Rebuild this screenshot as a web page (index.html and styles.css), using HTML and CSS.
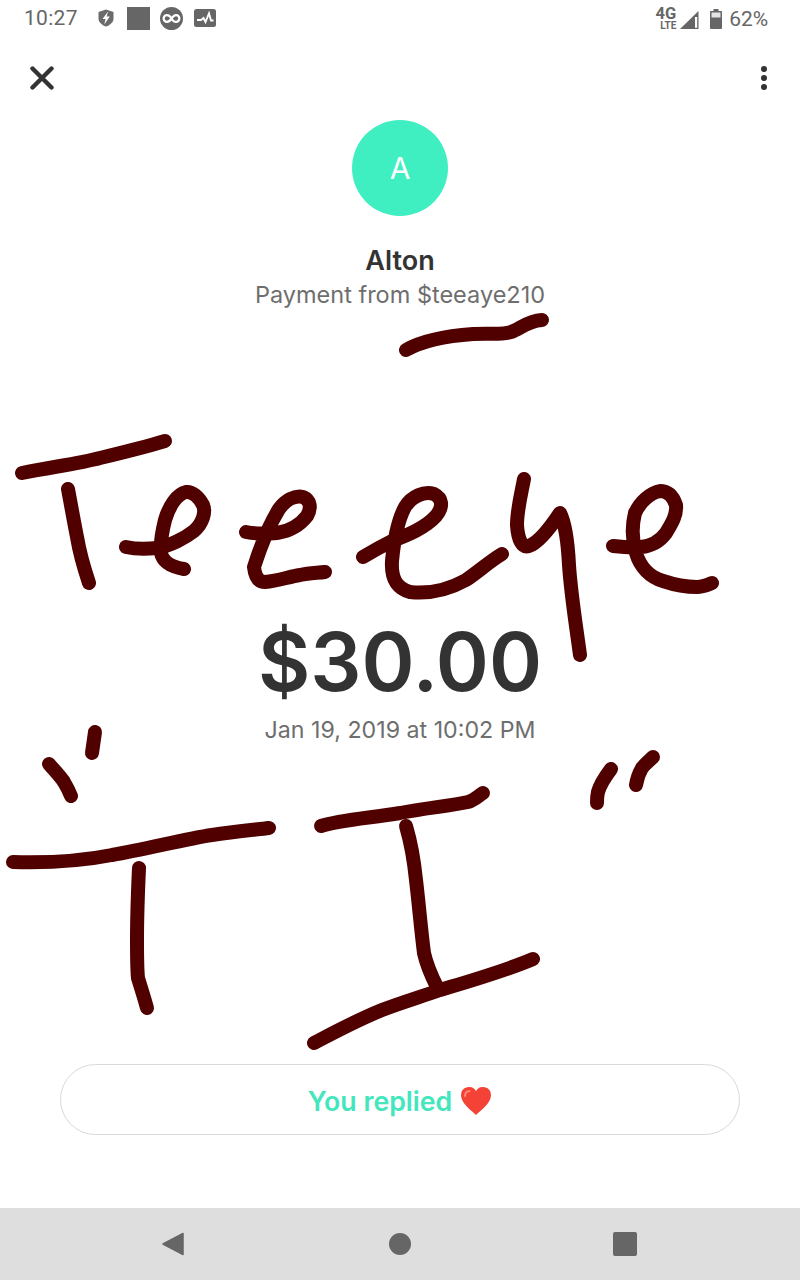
FILE: index.html
```html
<!DOCTYPE html>
<html lang="en">
<head>
<meta charset="utf-8">
<title>Payment from $teeaye210</title>
<link rel="stylesheet" href="styles.css">
</head>
<body>
<div class="screen">
  <header class="status">
    <div class="status-group">
      <span class="time">10:27</span>
      <svg class="ic-shield" viewBox="0 0 16 18"><path d="M8 0.500 15.500 3v6.500c0 3.800-3.200 6.500-7.500 8C3.700 16 .5 13.300.5 9.500V3z" fill="#6b6b6b"/><path d="M10 2.500 4.500 10h3L6.300 15.500 11.800 7.500H8.700z" fill="#fff"/></svg>
      <span class="ic-square"></span>
      <svg class="ic-link" viewBox="0 0 24 24"><circle cx="12" cy="12" r="12" fill="#666"/><path d="M11 10.500C10 9.300 8.800 8.500 7.300 8.500a3.500 3.500 0 0 0 0 7c1.900 0 3.200-1.300 4.700-3.500s2.800-3.500 4.700-3.500a3.500 3.500 0 0 1 0 7c-1.500 0-2.700-.8-3.700-2" fill="none" stroke="#fff" stroke-width="2.400" stroke-linecap="round"/></svg>
      <svg class="ic-pulse" viewBox="0 0 22 18"><rect width="22" height="18" rx="2.500" fill="#666"/><path d="M3 11h4l2.500-2 2 4L15 4.500l2 7h2.500" fill="none" stroke="#fff" stroke-width="1.900"/></svg>
    </div>
    <div class="status-group right">
      <span class="net"><span class="net-big">4G</span><span class="net-small">LTE</span></span>
      <svg class="ic-signal" viewBox="0 0 19 18"><path d="M18.500 0v18H0z" fill="#666"/><path d="M15 6h2.200v10.800H15z" fill="#fff"/></svg>
      <svg class="ic-battery" viewBox="0 0 12 20"><path d="M3.500 0h5v2H11a1 1 0 0 1 1 1v16a1 1 0 0 1-1 1H1a1 1 0 0 1-1-1V3a1 1 0 0 1 1-1h2.500z" fill="#666"/><rect x="1.500" y="3.500" width="9" height="5" fill="#e4e4e4"/></svg>
      <span class="pct">62%</span>
    </div>
  </header>

  <nav class="toolbar">
    <svg class="ic-close" viewBox="0 0 24 24"><path d="M2.500 2.500l19 19M21.500 2.500l-19 19" stroke="#333" stroke-width="4.400" stroke-linecap="round"/></svg>
    <svg class="ic-more" viewBox="0 0 6 24"><circle cx="3" cy="3" r="3" fill="#333"/><circle cx="3" cy="12" r="3" fill="#333"/><circle cx="3" cy="21" r="3" fill="#333"/></svg>
  </nav>

  <main class="content">
    <div class="avatar">A</div>
    <h1 class="name">Alton</h1>
    <p class="subtitle">Payment from $teeaye210</p>
    <p class="amount">$30.00</p>
    <p class="date">Jan 19, 2019 at 10:02 PM</p>
    <button class="reply">You replied <svg class="heart" viewBox="0 0 32 30"><path d="M16 29C11 24 1 17.500 1 9a8 8 0 0 1 15-3.800A8 8 0 0 1 31 9c0 8.500-10 15-15 20z" fill="#f44336"/><path d="M5 10c0-3 2-5 4.500-5" stroke="#ff8a80" stroke-width="2" fill="none" stroke-linecap="round"/></svg></button>
  </main>

  <footer class="navbar">
    <svg class="ic-back" viewBox="0 0 22 24"><path d="M21 1.500v21L1 12z" fill="#666" stroke="#666" stroke-width="1.500" stroke-linejoin="round"/></svg>
    <span class="ic-home"></span>
    <span class="ic-recent"></span>
  </footer>

  <svg class="ink" viewBox="0 0 800 1280" fill="none" stroke="#510000" stroke-width="14" stroke-linecap="round" stroke-linejoin="round">
    <path d="M406 350C420 342 445 336 473 334C490 333 503 335 511 332C520 329 527 321 542 320"/>
    <path d="M22 473C50 467 78 464 100 458C125 452 145 447 165 441"/>
    <path d="M68 489C71 505 74 522 77 537C80 555 84 568 89 583"/>
    <path d="M126 547C135 549 147 549 157 548C170 546 185 538 194 531C203 523 206 512 203 505C199 497 192 491 186 492C177 494 169 506 165 520C162 532 160 544 161 553C163 563 172 567 184 569"/>
    <path d="M246 532C256 534 266 534 277 533C290 531 300 525 307 516C312 507 310 500 303 497C294 495 285 501 279 509C271 522 261 545 254 567C255 576 258 582 265 582C278 581 288 577 300 575C309 573 317 573 325 572"/>
    <path d="M363 557C373 551 382 546 392 541C408 535 425 528 436 516C444 506 442 498 434 494C424 491 412 496 405 507C398 520 394 540 392 561C391 578 396 588 410 592C428 594 448 590 466 580C478 572 490 561 502 554"/>
    <path d="M524 479C521 495 517 510 517 525C518 540 522 548 529 546C540 542 552 525 560 513C566 525 568 545 569 565C571 595 576 625 580 655"/>
    <path d="M613 546C622 547 632 548 641 547C652 546 660 541 666 533C672 523 677 515 676 505C673 496 668 491 660 491C650 493 640 502 635 513C632 525 632 540 636 553C640 567 650 577 663 581C675 585 688 587 697 587C703 587 707 585 712 583"/>
    <path d="M95 732C94 739 93 746 92 753"/>
    <path d="M49 764C55 771 60 776 64 782C67 787 69 791 71 796"/>
    <path d="M13 862C50 863 82 861 112 855C147 849 185 839 212 835C232 832 252 830 269 828"/>
    <path d="M139 868C138 890 137 915 137 940C137 955 137 968 138 978C141 988 144 997 147 1008"/>
    <path d="M321 826C340 820 370 818 400 813C425 808 450 806 468 802C475 800 478 796 483 793"/>
    <path d="M406 826C411 843 414 860 416 880C419 905 421 930 424 953C427 967 432 977 437 987"/>
    <path d="M314 1043C335 1032 355 1021 382 1010C400 1003 420 997 440 990C470 981 505 971 533 959"/>
    <path d="M611 769C605 777 600 785 598 792C597 796 597 800 597 803"/>
    <path d="M653 757C649 761 645 764 642 768C639 773 637 779 636 785"/>
  </svg>
</div>
</body>
</html>
```

FILE: styles.css
```css
* { box-sizing: border-box; }

html, body {
  margin: 0;
  padding: 0;
  background: #fff;
}

.screen {
  position: relative;
  width: 800px;
  height: 1280px;
  display: flex;
  flex-direction: column;
  overflow: hidden;
  background: #fff;
  font-family: Inter, "Liberation Sans", sans-serif;
  color: #333;
}

.status {
  height: 36px;
  flex: none;
  display: flex;
  justify-content: space-between;
  align-items: center;
  padding: 0 32px 0 24px;
  font-family: Roboto, sans-serif;
  color: #666;
}

.status-group { display: flex; align-items: center; }
.status-group.right { padding-top: 1px; }

.time { font-size: 21px; letter-spacing: 0.3px; margin-right: 20px; }
.ic-shield { width: 16px; height: 18px; margin-right: 13px; }
.ic-square { width: 23px; height: 23px; background: #666; margin-right: 10px; }
.ic-link { width: 23px; height: 23px; margin-right: 11px; }
.ic-pulse { width: 22px; height: 18px; }

.net {
  display: flex;
  flex-direction: column;
  align-items: flex-end;
  font-weight: 700;
  line-height: 1;
  margin-right: 4px;
  width: 21px;
}
.net-big { font-size: 16.500px; line-height: 14px; }
.net-small { font-size: 10px; line-height: 10px; }

.ic-signal { width: 19px; height: 18px; margin-right: 11px; margin-top: 3px; }
.ic-battery { width: 12px; height: 20px; margin-right: 7px; }
.pct { font-size: 21px; letter-spacing: -0.1px; }

.toolbar {
  height: 84px;
  flex: none;
  display: flex;
  justify-content: space-between;
  align-items: center;
  padding: 0 33px 0 30px;
}
.ic-close { width: 24px; height: 24px; }
.ic-more { width: 6px; height: 24px; }

.content {
  flex: 1;
  display: flex;
  flex-direction: column;
  align-items: center;
  padding: 0 60px 73px;
}

.avatar {
  width: 96px;
  height: 96px;
  flex: none;
  border-radius: 50%;
  background: #3feec1;
  color: #fff;
  font-size: 30px;
  line-height: 96px;
  text-align: center;
}

.name {
  margin: 30px 0 0;
  font-size: 27px;
  line-height: 30px;
  font-weight: 600;
  color: #333;
}

.subtitle {
  margin: 4px 0 0;
  font-size: 23.500px;
  line-height: 30px;
  color: #6e6e6e;
}

.amount {
  margin: 302px 0 0;
  font-size: 80.500px;
  line-height: 100px;
  font-weight: 600;
  color: #333;
}

.date {
  margin: 3px 0 0;
  font-size: 23.200px;
  line-height: 30px;
  color: #6e6e6e;
}

.reply {
  margin-top: auto;
  width: 680px;
  height: 71px;
  flex: none;
  display: flex;
  justify-content: center;
  align-items: center;
  gap: 8px;
  padding-top: 3px;
  border: 1px solid #d9d9d9;
  border-radius: 36px;
  background: #fff;
  font-family: Inter, sans-serif;
  font-size: 26.700px;
  font-weight: 600;
  color: #43e6bd;
}

.heart { width: 32px; height: 30px; }

.navbar {
  height: 72px;
  flex: none;
  display: flex;
  align-items: center;
  padding-left: 162px;
  background: #dedede;
}

.ic-back { width: 22px; height: 24px; }
.ic-home { width: 22px; height: 22px; margin-left: 205px; border-radius: 50%; background: #666; }
.ic-recent { width: 24px; height: 24px; margin-left: 202px; border-radius: 2px; background: #666; }

.ink {
  position: absolute;
  left: 0;
  top: 0;
  width: 800px;
  height: 1280px;
  pointer-events: none;
}
```
